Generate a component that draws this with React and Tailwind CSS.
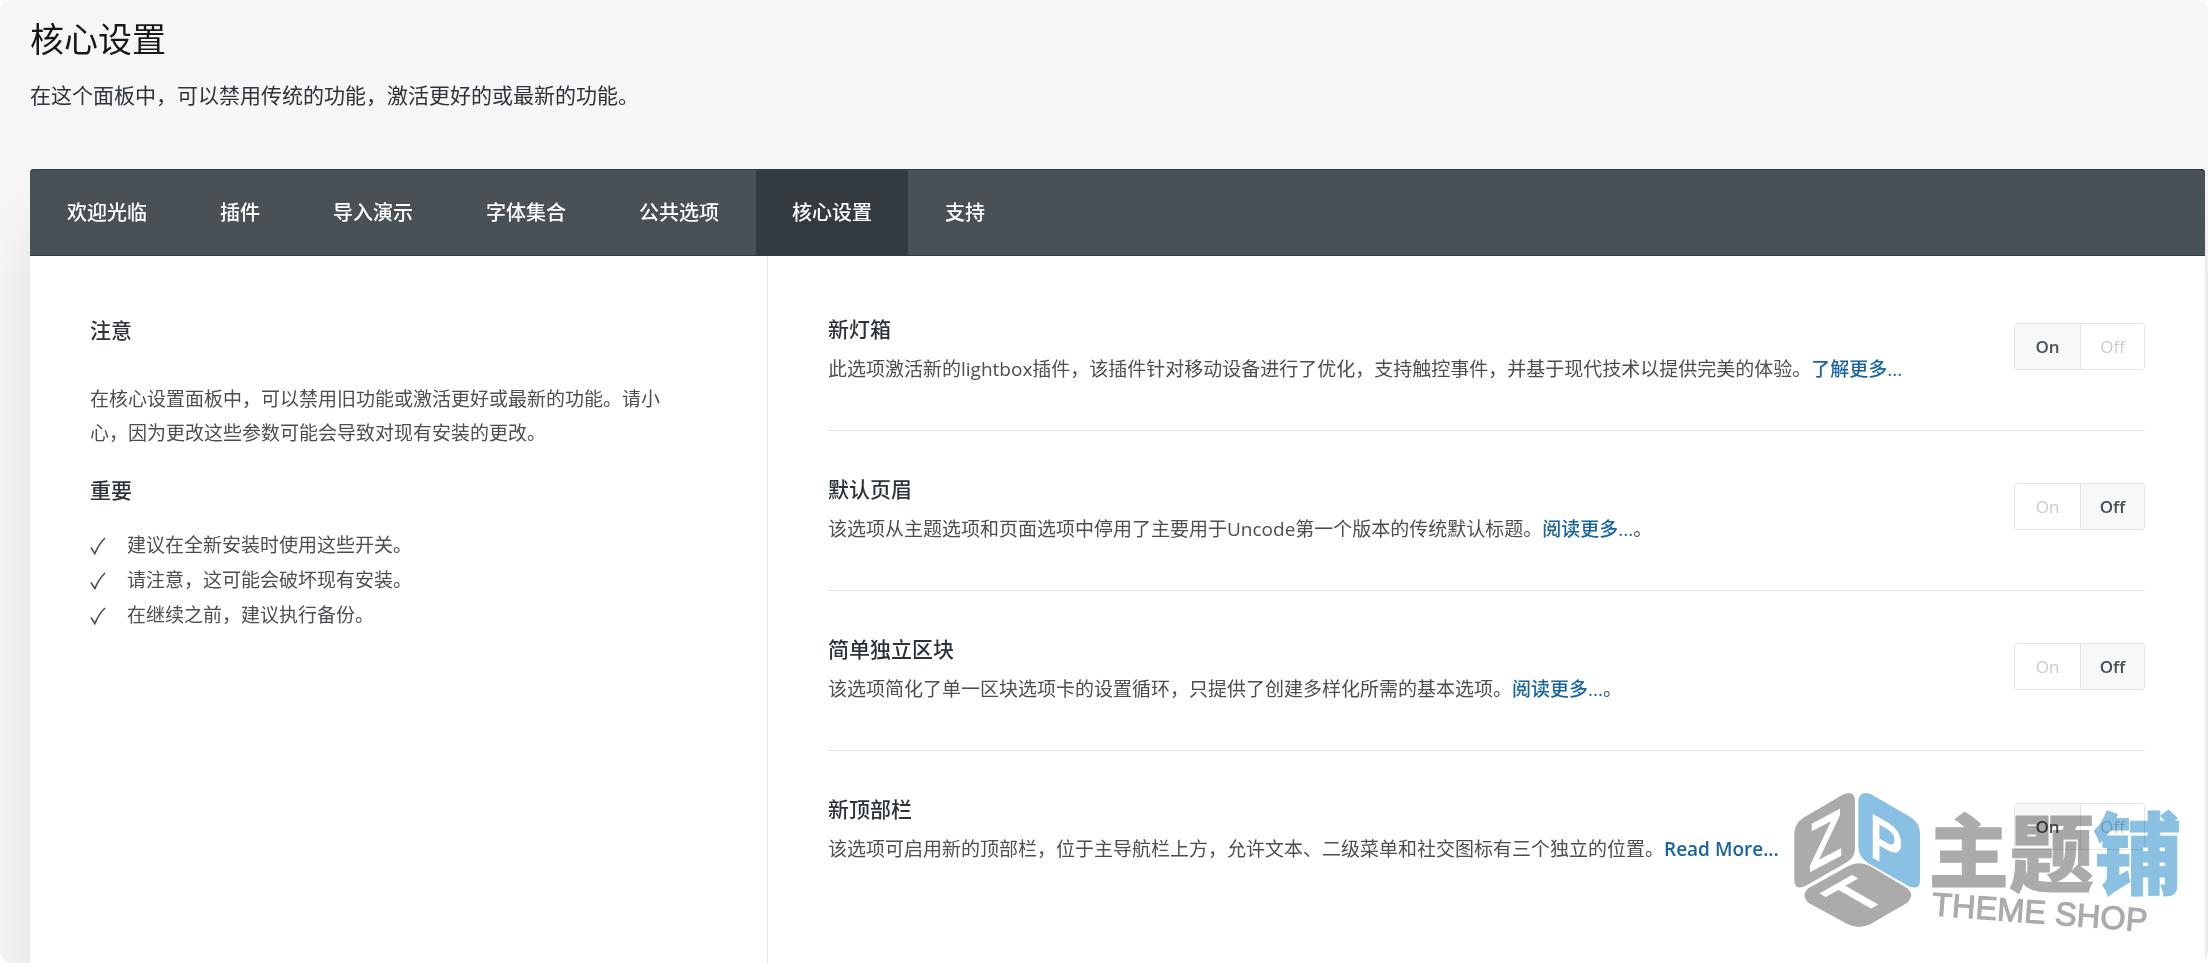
import { useState } from "react";

const tabs = ["欢迎光临", "插件", "导入演示", "字体集合", "公共选项", "核心设置", "支持"];

const notes = [
  "建议在全新安装时使用这些开关。",
  "请注意，这可能会破坏现有安装。",
  "在继续之前，建议执行备份。",
];

const options = [
  {
    id: "lightbox",
    title: "新灯箱",
    text: "此选项激活新的lightbox插件，该插件针对移动设备进行了优化，支持触控事件，并基于现代技术以提供完美的体验。",
    link: "了解更多...",
    weight: "font-medium",
    tail: "",
    on: true,
  },
  {
    id: "header",
    title: "默认页眉",
    text: "该选项从主题选项和页面选项中停用了主要用于Uncode第一个版本的传统默认标题。",
    link: "阅读更多...",
    weight: "font-medium",
    tail: "。",
    on: false,
  },
  {
    id: "block",
    title: "简单独立区块",
    text: "该选项简化了单一区块选项卡的设置循环，只提供了创建多样化所需的基本选项。",
    link: "阅读更多...",
    weight: "font-medium",
    tail: "。",
    on: false,
  },
  {
    id: "topbar",
    title: "新顶部栏",
    text: "该选项可启用新的顶部栏，位于主导航栏上方，允许文本、二级菜单和社交图标有三个独立的位置。",
    link: "Read More...",
    weight: "font-semibold",
    tail: "",
    on: true,
  },
];

function Toggle({ label, initial }) {
  const [on, setOn] = useState(initial);
  const base = "h-full text-[17px] leading-6 ";
  const active = "bg-[#f7f9f9] font-semibold text-[#464f57]";
  const idle = "bg-white text-[#c8cacc]";
  return (
    <div
      role="group"
      aria-label={label}
      className="mt-[10px] flex h-[47px] w-[131px] shrink-0 overflow-hidden rounded border border-[#e1e3e4]"
    >
      <button
        type="button"
        aria-pressed={on}
        onClick={() => setOn(true)}
        className={base + "w-[66px] border-r border-[#e1e3e4] " + (on ? active : idle)}
      >
        On
      </button>
      <button
        type="button"
        aria-pressed={!on}
        onClick={() => setOn(false)}
        className={base + "flex-1 " + (on ? idle : active)}
      >
        Off
      </button>
    </div>
  );
}

function ShopLogo() {
  return (
    <svg
      viewBox="390 15 1200 450"
      aria-hidden="true"
      className="pointer-events-none absolute right-[18px] bottom-7 w-[400px] overflow-visible mix-blend-multiply"
    >
      <path
        fill="#ababab"
        d="M403 162Q403 130 430 113L548 44Q585 28 585 65V205Q585 232 562 246L440 316Q403 335 403 300Z"
      />
      <path
        fill="#8ac1e2"
        d="M595 65Q597 30 632 42L750 110Q780 128 780 160V305Q778 332 745 318L625 250Q597 232 595 200Z"
      />
      <path
        fill="#ababab"
        d="M445 325L565 258Q597 242 630 258L742 325Q765 345 742 368L632 432Q597 450 562 432L445 368Q422 345 445 325Z"
      />
      <g fill="#fff" stroke="#fff" strokeWidth="8" fontSize="200" className="font-['Liberation_Sans',sans-serif]">
        <text transform="matrix(.8 -.42 0 .98 448 274)">Z</text>
        <text transform="matrix(.74 .42 0 .9 629 224)">P</text>
        <text transform="matrix(.8 -.46 .8 .46 592 406)">T</text>
      </g>
      <g
        fontWeight="900"
        strokeWidth="3"
        strokeLinejoin="round"
        className="font-['Noto_Sans_CJK_SC',sans-serif]"
      >
        <text x="806" y="304" fontSize="240" fill="#ababab" stroke="#ababab">主</text>
        <text x="1048" y="314" fontSize="254" fill="#ababab" stroke="#ababab">题</text>
        <text x="1300" y="322" fontSize="266" fill="#8ac1e2" stroke="#8ac1e2">铺</text>
      </g>
      <text
        transform="translate(814 406) rotate(4.3)"
        fontSize="98"
        fill="#ababab"
        stroke="#ababab"
        strokeWidth="3"
        className="font-['Liberation_Sans',sans-serif]"
      >
        THEME SHOP
      </text>
    </svg>
  );
}

export default function App() {
  return (
    <div className="bg-white font-['Open_Sans','Noto_Sans_CJK_SC',sans-serif]">
      <div className="relative h-screen overflow-hidden rounded-xl bg-[#f6f6f8]">
        <header className="pl-[30px] pt-[14px]">
          <h1 className="text-[34px] leading-[50px] text-[#16191c]">核心设置</h1>
          <p className="mt-[15px] text-[21px] leading-8 text-[#2d3338]">
            在这个面板中，可以禁用传统的功能，激活更好的或最新的功能。
          </p>
        </header>
        <main className="mt-[58px] ml-[30px] mr-[3px] flex min-h-full flex-col rounded bg-white shadow-[0_60px_60px_rgba(0,0,0,0.09)]">
          <nav className="flex h-[87px] gap-px overflow-hidden rounded-t bg-[#495056] pl-px shadow-[inset_0_-1px_#33393c,inset_0_1px_#33393c]">
            {tabs.map((t) => (
              <a
                key={t}
                href="#"
                aria-current={t === "核心设置" ? "page" : undefined}
                className={
                  "flex items-center px-9 text-[20px] leading-8 font-medium text-white " +
                  (t === "核心设置" ? "bg-[#333a40]" : "")
                }
              >
                {t}
              </a>
            ))}
          </nav>
          <div className="flex flex-1">
            <aside className="w-[738px] shrink-0 border-r border-[#e2e3e5] pl-[60px] pr-24 pt-[58px] text-[19px] text-[#4a4f55]">
              <h2 className="text-[21px] leading-8 font-medium text-[#2c343a]">注意</h2>
              <p className="mt-9 leading-[34px]">
                在核心设置面板中，可以禁用旧功能或激活更好或最新的功能。请小心，因为更改这些参数可能会导致对现有安装的更改。
              </p>
              <h2 className="mt-6 text-[21px] leading-8 font-medium text-[#2c343a]">重要</h2>
              <ul className="mt-[22px] leading-[35px]">
                {notes.map((n) => (
                  <li key={n} className="flex items-center gap-[21px]">
                    <svg viewBox="0 0 16 18" className="h-[18px] w-4 fill-none stroke-current stroke-[1.6]">
                      <path d="M1 10.5 4.8 16.6C7.6 10 10.6 5.2 15 1" />
                    </svg>
                    {n}
                  </li>
                ))}
              </ul>
            </aside>
            <section className="flex-1 pl-[60px] pr-[60px] pt-[14px]">
              {options.map((o, i) => (
                <div
                  key={o.id}
                  className={"flex h-[160px] items-start justify-between border-t pt-[42px] " + (i ? "border-[#e1e3e4]" : "border-transparent")}
                >
                  <div>
                    <h3 className="text-[21px] leading-8 font-medium text-[#2c343a]">{o.title}</h3>
                    <p className="mt-[5px] text-[19px] leading-[38px] text-[#4a4f55]">
                      {o.text}
                      <a href="#" className={"text-[#1a64a3] " + o.weight}>{o.link}</a>
                      {o.tail}
                    </p>
                  </div>
                  <Toggle label={o.title} initial={o.on} />
                </div>
              ))}
            </section>
          </div>
        </main>
        <ShopLogo />
      </div>
    </div>
  );
}
